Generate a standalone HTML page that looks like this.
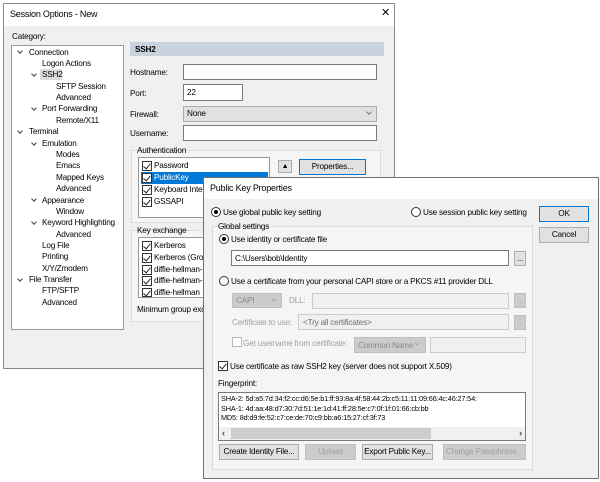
<!DOCTYPE html>
<html><head><meta charset="utf-8"><style>
*{margin:0;padding:0;box-sizing:border-box}
body{width:600px;height:482px;background:#fff;position:relative;overflow:hidden;font-family:"Liberation Sans",sans-serif;font-size:8.2px;color:#000;letter-spacing:-0.2px}
.a{position:absolute;white-space:nowrap}
.win{position:absolute;background:#f0f0f0;border:1px solid #8a8a8a}
.tb{position:absolute;left:0;right:0;top:0;background:#fff}
.in{position:absolute;background:#fff;border:1px solid #7a7a7a}
.sel{position:absolute;background:#e1e1e1;border:1px solid #adadad}
.btn{position:absolute;background:#e1e1e1;border:1px solid #adadad;text-align:center;white-space:nowrap;overflow:hidden}
.dis{color:#a0a0a0;background:#ccc;border-color:#bfbfbf}
.grp{position:absolute;border:1px solid #dcdcdc;background:#f5f5f5}
.t{position:absolute;white-space:nowrap;line-height:11px}
.cb{position:absolute;width:10px;height:10px;border:1px solid #333;background:#fff}
.cb.k::after{content:"";position:absolute;left:2px;top:0px;width:3px;height:6px;border:solid #222;border-width:0 1px 1px 0;transform:rotate(40deg)}
.rd{position:absolute;width:10px;height:10px;border:1px solid #333;border-radius:50%;background:#fff}
.rd.k::after{content:"";position:absolute;left:2px;top:2px;width:4px;height:4px;border-radius:50%;background:#000}
.chev{position:absolute;width:4px;height:4px;border:solid #444;border-width:0 1px 1px 0;transform:rotate(45deg)}
.clip{position:absolute;overflow:hidden}
</style></head><body>

<div class="win" style="left:3px;top:3px;width:392px;height:366px">
 <div class="tb" style="height:22px"></div>
 <div class="t" style="left:6px;top:5px;font-size:9px">Session Options - New</div>
 <div class="t" style="left:377px;top:4px;font-size:11px;font-weight:normal">✕</div>
 <div class="t" style="left:8px;top:27px">Category:</div>
</div>
<div class="in" style="left:11px;top:45px;width:113px;height:285px;border-color:#999">
</div>
<!-- tree -->
<div class="chev" style="left:18px;top:49px"></div><div class="t" style="left:29px;top:47px">Connection</div>
<div class="t" style="left:42px;top:58px">Logon Actions</div>
<div class="chev" style="left:32px;top:72px"></div><div class="a" style="left:40px;top:69px;width:22px;height:11px;background:#dcdcdc"></div><div class="t" style="left:42px;top:69px">SSH2</div>
<div class="t" style="left:56px;top:81px">SFTP Session</div>
<div class="t" style="left:56px;top:92px">Advanced</div>
<div class="chev" style="left:32px;top:106px"></div><div class="t" style="left:42px;top:103px">Port Forwarding</div>
<div class="t" style="left:56px;top:115px">Remote/X11</div>
<div class="chev" style="left:18px;top:129px"></div><div class="t" style="left:29px;top:126px">Terminal</div>
<div class="chev" style="left:32px;top:141px"></div><div class="t" style="left:42px;top:138px">Emulation</div>
<div class="t" style="left:56px;top:149px">Modes</div>
<div class="t" style="left:56px;top:160px">Emacs</div>
<div class="t" style="left:56px;top:172px">Mapped Keys</div>
<div class="t" style="left:56px;top:183px">Advanced</div>
<div class="chev" style="left:32px;top:197px"></div><div class="t" style="left:42px;top:195px">Appearance</div>
<div class="t" style="left:56px;top:206px">Window</div>
<div class="chev" style="left:32px;top:220px"></div><div class="t" style="left:42px;top:217px">Keyword Highlighting</div>
<div class="t" style="left:56px;top:229px">Advanced</div>
<div class="t" style="left:42px;top:240px">Log File</div>
<div class="t" style="left:42px;top:251px">Printing</div>
<div class="t" style="left:42px;top:263px">X/Y/Zmodem</div>
<div class="chev" style="left:18px;top:277px"></div><div class="t" style="left:29px;top:274px">File Transfer</div>
<div class="t" style="left:42px;top:285px">FTP/SFTP</div>
<div class="t" style="left:42px;top:297px">Advanced</div>

<!-- right panel -->
<div class="a" style="left:130px;top:42px;width:254px;height:14px;background:#c9d3de"></div>
<div class="t" style="left:135px;top:44px;font-weight:bold">SSH2</div>
<div class="t" style="left:130px;top:67px">Hostname:</div><div class="in" style="left:183px;top:64px;width:194px;height:16px"></div>
<div class="t" style="left:130px;top:88px">Port:</div><div class="in" style="left:183px;top:84px;width:60px;height:17px"></div><div class="t" style="left:187px;top:87px">22</div>
<div class="t" style="left:130px;top:109px">Firewall:</div><div class="sel" style="left:183px;top:106px;width:194px;height:16px"></div><div class="t" style="left:187px;top:108px">None</div><div class="chev" style="left:367px;top:110px;border-color:#777"></div>
<div class="t" style="left:130px;top:128px">Username:</div><div class="in" style="left:183px;top:125px;width:194px;height:16px"></div>

<div class="grp" style="left:131px;top:150px;width:250px;height:73px"></div>
<div class="t" style="left:137px;top:145px">Authentication</div>
<div class="in" style="left:138px;top:157px;width:132px;height:61px;border-color:#999"></div>
<div class="a" style="left:141px;top:172px;width:127px;height:12px;background:#0078d7"></div>
<div class="cb k" style="left:142px;top:161px"></div><div class="t" style="left:154px;top:160px">Password</div>
<div class="cb k" style="left:142px;top:173px"></div><div class="t" style="left:154px;top:172px;color:#fff">PublicKey</div>
<div class="cb k" style="left:142px;top:185px"></div><div class="t" style="left:154px;top:184px">Keyboard Interactive</div>
<div class="cb k" style="left:142px;top:197px"></div><div class="t" style="left:154px;top:196px">GSSAPI</div>
<div class="btn" style="left:278px;top:160px;width:14px;height:13px;font-size:7px;line-height:11px">▲</div>
<div class="btn" style="left:299px;top:159px;width:67px;height:16px;border:1px solid #0078d7;line-height:14px">Properties...</div>

<div class="grp" style="left:131px;top:230px;width:250px;height:92px"></div>
<div class="t" style="left:137px;top:225px">Key exchange</div>
<div class="in" style="left:138px;top:237px;width:132px;height:61px;border-color:#999;overflow:hidden"></div>
<div class="cb k" style="left:142px;top:241px"></div><div class="t" style="left:154px;top:240px">Kerberos</div>
<div class="cb k" style="left:142px;top:253px"></div><div class="t" style="left:154px;top:252px">Kerberos (Group)</div>
<div class="cb k" style="left:142px;top:265px"></div><div class="t" style="left:154px;top:264px">diffie-hellman-</div>
<div class="cb k" style="left:142px;top:276px"></div><div class="t" style="left:154px;top:275px">diffie-hellman-</div>
<div class="cb k" style="left:142px;top:288px;height:9px"></div><div class="t" style="left:154px;top:287px">diffie-hellman</div>
<div class="t" style="left:137px;top:304px">Minimum group exchange</div>

<!-- dialog -->
<div class="win" style="left:203px;top:177px;width:396px;height:302px;border-color:#707070">
 <div class="tb" style="height:21px"></div>
 <div class="t" style="left:6px;top:5px;font-size:9px">Public Key Properties</div>
</div>
<div class="rd k" style="left:211px;top:207px"></div><div class="t" style="left:223px;top:207px">Use global public key setting</div>
<div class="rd" style="left:411px;top:207px"></div><div class="t" style="left:423px;top:207px">Use session public key setting</div>
<div class="btn" style="left:539px;top:206px;width:50px;height:16px;border-color:#0078d7;line-height:14px">OK</div>
<div class="btn" style="left:539px;top:227px;width:50px;height:16px;line-height:14px">Cancel</div>

<div class="grp" style="left:212px;top:226px;width:321px;height:244px"></div>
<div class="t" style="left:218px;top:221px">Global settings</div>
<div class="rd k" style="left:219px;top:234px"></div><div class="t" style="left:231px;top:234px">Use identity or certificate file</div>
<div class="in" style="left:231px;top:250px;width:278px;height:16px"></div><div class="t" style="left:235px;top:253px">C:\Users\bob\Identity</div>
<div class="btn" style="left:514px;top:251px;width:12px;height:15px;line-height:13px">...</div>
<div class="rd" style="left:219px;top:276px"></div><div class="t" style="left:231px;top:276px">Use a certificate from your personal CAPI store or a PKCS #11 provider DLL</div>
<div class="sel dis" style="left:232px;top:293px;width:50px;height:15px"></div><div class="t" style="left:236px;top:295px;color:#8a8a8a">CAPI</div><div class="chev" style="left:272px;top:297px;border-color:#aaa"></div>
<div class="t" style="left:289px;top:295px;color:#a0a0a0">DLL:</div>
<div class="in" style="left:312px;top:293px;width:197px;height:16px;border-color:#ccc;background:#f0f0f0"></div>
<div class="btn dis" style="left:514px;top:293px;width:12px;height:15px;line-height:13px">...</div>
<div class="t" style="left:232px;top:317px;color:#a0a0a0">Certificate to use:</div>
<div class="in" style="left:298px;top:314px;width:211px;height:16px;border-color:#ccc;background:#f0f0f0"></div><div class="t" style="left:303px;top:317px;color:#6d6d6d">&lt;Try all certificates&gt;</div>
<div class="btn dis" style="left:514px;top:315px;width:12px;height:15px;line-height:13px">...</div>
<div class="cb" style="left:232px;top:337px;border-color:#bbb"></div><div class="t" style="left:243px;top:338px;color:#a0a0a0">Get username from certificate:</div>
<div class="sel dis" style="left:354px;top:337px;width:72px;height:16px"></div><div class="t" style="left:358px;top:340px;color:#8a8a8a">Common Name</div><div class="chev" style="left:415px;top:341px;border-color:#aaa"></div>
<div class="in" style="left:430px;top:337px;width:96px;height:16px;border-color:#ccc;background:#f0f0f0"></div>
<div class="cb k" style="left:218px;top:361px"></div><div class="t" style="left:230px;top:361px">Use certificate as raw SSH2 key (server does not support X.509)</div>
<div class="t" style="left:218px;top:378px">Fingerprint:</div>
<div class="in" style="left:218px;top:392px;width:308px;height:49px;overflow:hidden;font-size:7.3px;letter-spacing:-0.15px">
 <div class="t" style="left:2px;top:1px;line-height:9.5px">SHA-2: 5d:a5:7d:34:f2:cc:d6:5e:b1:ff:93:8a:4f:58:44:2b:c5:11:11:09:66:4c:46:27:54:<br>SHA-1: 4d:aa:48:d7:30:7d:51:1e:1d:41:ff:28:5e:c7:0f:1f:01:66:cb:bb<br>MD5: 8d:d9:fe:52:c7:ce:de:70:c9:bb:a6:15:27:cf:3f:73</div>
 <div class="a" style="left:0;right:0;bottom:0;height:13px;background:#f0f0f0"></div>
 <div class="a" style="left:12px;bottom:1px;width:200px;height:11px;background:#cdcdcd"></div>
 <div class="t" style="left:3px;bottom:1px;font-size:9px">‹</div><div class="t" style="right:3px;bottom:1px;font-size:9px">›</div>
</div>
<div class="btn" style="left:219px;top:444px;width:80px;height:16px;line-height:14px">Create Identity File...</div>
<div class="btn dis" style="left:305px;top:444px;width:51px;height:16px;line-height:14px">Upload</div>
<div class="btn" style="left:362px;top:444px;width:71px;height:16px;line-height:14px">Export Public Key...</div>
<div class="btn dis" style="left:443px;top:444px;width:83px;height:16px;line-height:14px">Change Passphrase...</div>
</body></html>
